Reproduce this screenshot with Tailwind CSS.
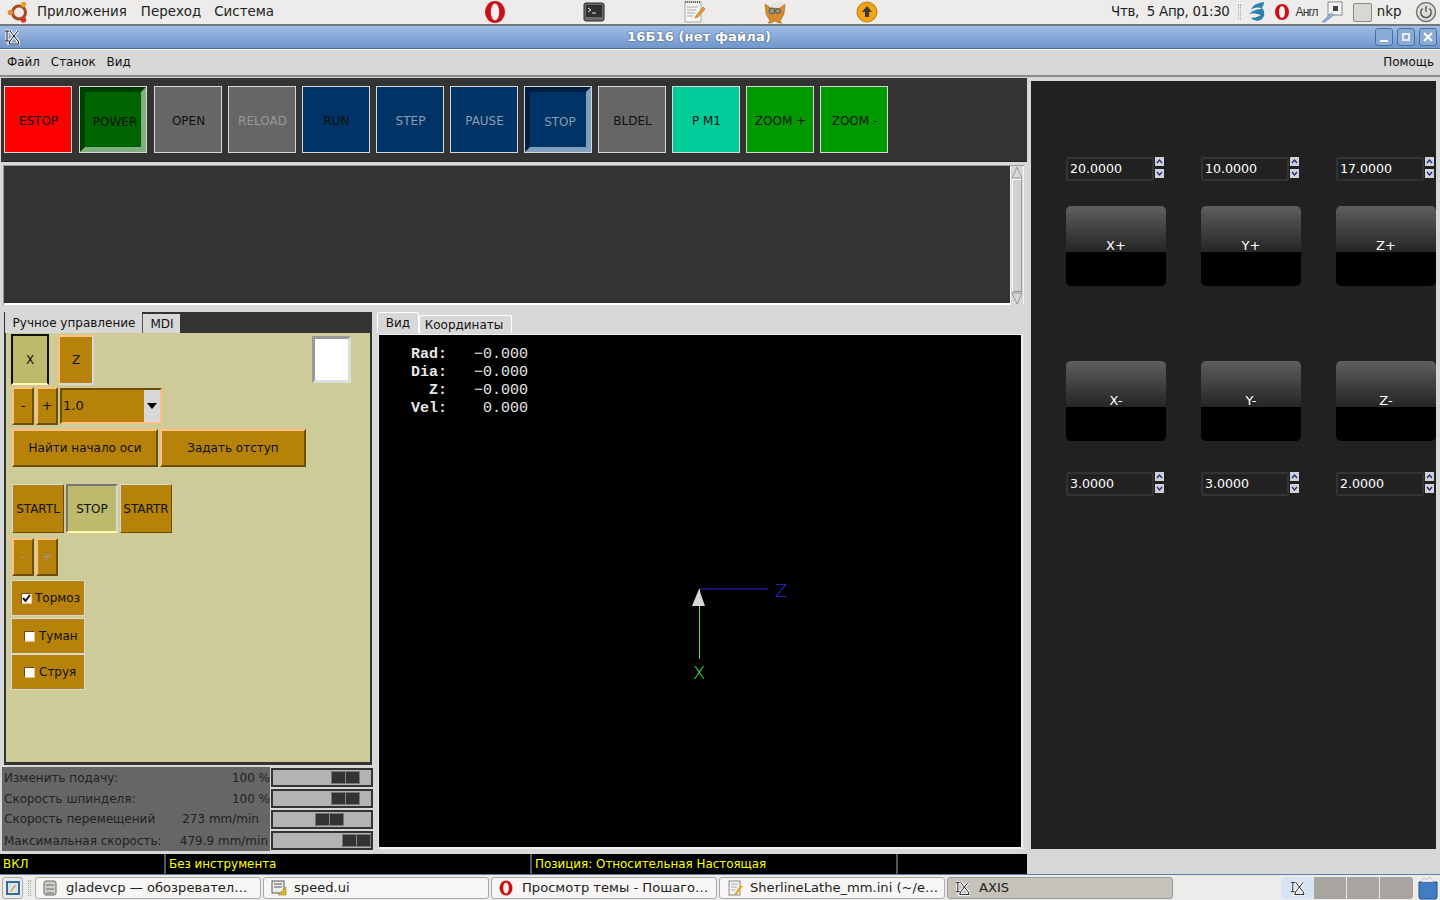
<!DOCTYPE html>
<html lang="ru">
<head>
    <meta charset="UTF-8">
    <title>16Б16 (нет файла)</title>
    <script src="https://cdn.jsdelivr.net/npm/@tailwindcss/browser@4"></script>
</head>
<body class="w-[1440px] h-[900px] overflow-hidden flex flex-col bg-[#d8d8d8] font-['DejaVu_Sans',sans-serif] text-[#111]">
    <!-- Top panel -->
    <header class="h-[26px] shrink-0 flex items-center bg-[#edecea] border-b-2 border-[#77777a] text-[13.4px] text-[#222]">
        <svg class="ml-[7px] w-[22px] h-[22px]" viewBox="0 0 22 22"><circle cx="12" cy="11.5" r="6.5" fill="none" stroke="#a8481c" stroke-width="3"/><circle cx="3.5" cy="11.5" r="2.8" fill="#e8873a"/><circle cx="16.5" cy="3.5" r="2.8" fill="#f0a030"/><circle cx="16.5" cy="19" r="2.8" fill="#d8342a"/></svg>
        <span class="ml-[7px] pl-[1px]">Приложения</span>
        <span class="ml-[14px]">Переход</span>
        <span class="ml-[13px]">Система</span>
        <!-- launchers -->
        <svg class="ml-[210px] w-[22px] h-[24px]" viewBox="0 0 22 24"><ellipse cx="11" cy="12" rx="10" ry="11" fill="#cc0f16"/><ellipse cx="11" cy="12" rx="4.2" ry="8.5" fill="#f6f0ee"/></svg>
        <svg class="ml-[77px] w-[22px] h-[20px]" viewBox="0 0 22 20"><rect x="1" y="1" width="20" height="18" rx="2" fill="#6a6d6e" stroke="#2a2a2a"/><rect x="3" y="3" width="16" height="12" fill="#2d3133"/><path d="M5 6l3 2-3 2M9 11h4" stroke="#eee" fill="none"/></svg>
        <svg class="ml-[77px] w-[24px] h-[24px]" viewBox="0 0 24 24"><rect x="3" y="2" width="16" height="20" fill="#f4f4f0" stroke="#aaa"/><path d="M5 7h11M5 10h9M5 13h8M5 16h6" stroke="#aaa"/><path d="M3 2h16" stroke="#666" stroke-dasharray="1 1" stroke-width="2"/><path d="M14 16l7-9 2 2-7 8-3 1z" fill="#f29a1f" stroke="#8a5a10" stroke-width=".5"/></svg>
        <svg class="ml-[56px] w-[26px] h-[24px]" viewBox="0 0 24 24"><path d="M2 4l6 4h8l6-4-1 10-4 7 2 2h-3l-4-2-4 2H5l2-2-4-7z" fill="#d98a2c" stroke="#8a5518" stroke-width=".5"/><path d="M6 7l8-6 8 3-6 4z" fill="#e4e4e0"/><circle cx="9" cy="11" r="3" fill="#8a9a80" stroke="#555"/><circle cx="15" cy="11" r="2.5" fill="#8a9a80" stroke="#555"/></svg>
        <svg class="ml-[68px] w-[22px] h-[22px]" viewBox="0 0 22 22"><circle cx="11" cy="11" r="10" fill="#efa512" stroke="#c9780a"/><path d="M11 5l5 6h-3v5H9v-5H6z" fill="#3a3a3a"/></svg>
        <span class="ml-[233px] whitespace-pre tracking-[-0.3px]">Чтв,  5 Апр, 01:30</span>
        <span class="ml-[8px] w-[3px] h-[16px] border-x border-dotted border-[#aaa]"></span>
        <svg class="ml-[6px] w-[20px] h-[22px]" viewBox="0 0 20 22"><path d="M17 1C10 2 6 4 4 9c4-3 8-3 11-1-4 0-9 1-13 5 5-1 9 0 12 1-3 2-7 3-10 3 3 3 8 4 11 1 3-3 3-8 0-11 1-2 2-4 2-6z" fill="#2a7fb0"/></svg>
        <svg class="ml-[7px] w-[16px] h-[18px]" viewBox="0 0 16 18"><ellipse cx="8" cy="9" rx="7" ry="8" fill="#cc0f16"/><ellipse cx="8" cy="9" rx="3" ry="6" fill="#f6f0ee"/></svg>
        <span class="ml-[6px] text-[12px] tracking-[-0.9px] font-['Liberation_Sans',sans-serif] text-[#333]">Англ</span>
        <svg class="ml-[3px] w-[22px] h-[22px]" viewBox="0 0 22 22"><rect x="7" y="1" width="14" height="13" fill="#f6f6f4" stroke="#888"/><rect x="12" y="5" width="5" height="5" fill="#444"/><path d="M1 21l9-9 3 2-9 7z" fill="#8fb0d8" stroke="#5a7aa8" stroke-width=".5"/></svg>
        <span class="ml-[10px] w-[19px] h-[19px] bg-[#d8d8d2] border border-[#8a8a86] rounded-[2px]"></span>
        <span class="ml-[5px] text-[13.4px]">nkp</span>
        <svg class="ml-[14px] w-[22px] h-[22px]" viewBox="0 0 22 22"><circle cx="11" cy="11" r="9.5" fill="#dddcd8" stroke="#777" stroke-width="1.5"/><path d="M11 5v6M7.5 7.5a5.2 5.2 0 1 0 7 0" fill="none" stroke="#444" stroke-width="1.2"/></svg>
    </header>

    <!-- Title bar -->
    <div class="h-[23px] shrink-0 flex items-center bg-linear-to-b from-[#9fbde5] to-[#7096cb] border-b border-[#47709f]">
        <span class="w-[24px] pl-[4px]"><svg class="w-[16px] h-[16px]" viewBox="0 0 16 16"><path d="M1 2h4M3 2v10M1 12h4M6 2l8 10M14 2L6 12M6 12l-1 3h10l-1-3" stroke="#fff" fill="none" stroke-width="3"/><path d="M1 2h4M3 2v10M1 12h4M6 2l8 10M14 2L6 12M6 12l-1 3h10l-1-3" stroke="#111" fill="none"/></svg></span>
        <span class="ml-[603px] w-[143px] whitespace-nowrap text-center text-[13px] font-bold text-white tracking-[0.15px] [text-shadow:0_0_2px_#345]">16Б16 (нет файла)</span>
        <div class="ml-auto flex gap-[4px] pr-[3px]">
            <span class="w-[18px] h-[18px] rounded-[3px] border border-[#47709f] bg-[#8aaad8] flex items-end justify-center pb-[3px]"><span class="w-[8px] h-[2px] bg-white"></span></span>
            <span class="w-[18px] h-[18px] rounded-[3px] border border-[#47709f] bg-[#8aaad8] flex items-center justify-center"><span class="w-[8px] h-[8px] border-2 border-[#e8eef8]"></span></span>
            <span class="w-[18px] h-[18px] rounded-[3px] border border-[#47709f] bg-[#8aaad8] flex items-center justify-center"><svg class="w-[10px] h-[10px]" viewBox="0 0 10 10"><path d="M1 1l8 8M9 1L1 9" stroke="#fff" stroke-width="2"/></svg></span>
        </div>
    </div>

    <!-- Menu -->
    <nav class="h-[28px] shrink-0 flex items-center gap-[11px] pl-[7px] pr-[6px] pt-[1px] bg-[#d8d8d8] border-t border-white border-b-2 border-b-[#8a8a8a] text-[11.9px]">
        <span>Файл</span><span>Станок</span><span>Вид</span>
        <span class="ml-auto">Помощь</span>
    </nav>

    <main class="flex-1 flex min-h-0">
        <div class="w-[1027px] shrink-0 flex flex-col">
            <!-- Toolbar -->
            <div class="mt-[1px] ml-[1px] h-[84px] shrink-0 bg-[#333] border-b border-[#222] pt-[8px] pl-[3px] flex gap-[6px] items-start text-[12px]">
                <button class="w-[68px] h-[67px] pt-[2px] pl-[1px] border border-[#d8d8d8] bg-[#ff0000] text-[#111]">ESTOP</button>
                <button class="ml-[1px] w-[68px] h-[67px] outline outline-1 -outline-offset-1 outline-[#d8d8d8] border-[6px] border-t-[#003f00] border-l-[#003f00] border-b-[#80b080] border-r-[#80b080] bg-[#006400] text-[#111] pt-[4px] pl-[4px]">POWER</button>
                <button class="ml-[1px] w-[68px] h-[67px] pt-[2px] pl-[1px] border border-[#d8d8d8] bg-[#666] text-[#111]">OPEN</button>
                <button class="w-[68px] h-[67px] pt-[2px] pl-[1px] border border-[#d8d8d8] bg-[#666] text-[#999]">RELOAD</button>
                <button class="w-[68px] h-[67px] pt-[2px] pl-[1px] border border-[#d8d8d8] bg-[#003366] text-[#111]">RUN</button>
                <button class="w-[68px] h-[67px] pt-[2px] pl-[1px] border border-[#d8d8d8] bg-[#003366] text-[#8a9cb0]">STEP</button>
                <button class="w-[68px] h-[67px] pt-[2px] pl-[1px] border border-[#d8d8d8] bg-[#003366] text-[#8a9cb0]">PAUSE</button>
                <button class="w-[68px] h-[67px] outline outline-1 -outline-offset-1 outline-[#d8d8d8] border-[6px] border-t-[#001f3f] border-l-[#001f3f] border-b-[#80a0c0] border-r-[#80a0c0] bg-[#003366] text-[#8a9cb0] pt-[4px] pl-[4px]">STOP</button>
                <button class="w-[68px] h-[67px] pt-[2px] pl-[1px] border border-[#d8d8d8] bg-[#666] text-[#111]">BLDEL</button>
                <button class="w-[68px] h-[67px] pt-[2px] pl-[1px] border border-[#d8d8d8] bg-[#00cc99] text-[#111]">P M1</button>
                <button class="w-[68px] h-[67px] pt-[2px] pl-[1px] border border-[#d8d8d8] bg-[#009900] text-[#111]">ZOOM +</button>
                <button class="w-[68px] h-[67px] pt-[2px] pl-[1px] border border-[#d8d8d8] bg-[#009900] text-[#111]">ZOOM -</button>
            </div>

            <!-- Message area -->
            <div class="mt-[3px] ml-[3px] mr-[3px] h-[140px] shrink-0 flex border-t border-l border-[#999]">
                <div class="flex-1 bg-[#333] border-b-2 border-white"></div>
                <div class="w-[14px] flex flex-col items-center bg-[#d8d8d8] border-x border-[#f4f4f4]">
                    <svg class="w-[12px] h-[13px]" viewBox="0 0 12 13"><path d="M1 12L6 1l5 11z" fill="#d8d8d8" stroke="#999"/></svg>
                    <div class="flex-1 w-[10px] bg-[#d0d0d0] border border-[#fafafa] border-r-[#999] border-b-[#999]"></div>
                    <svg class="w-[12px] h-[13px]" viewBox="0 0 12 13"><path d="M1 1l5 11 5-11z" fill="#d8d8d8" stroke="#999"/></svg>
                </div>
            </div>

            <div class="mt-[7px] flex flex-1 min-h-0">
                <!-- Left column -->
                <div class="w-[374px] shrink-0 flex flex-col">
                    <div class="ml-[4px] w-[368px] h-[453px] flex flex-col">
                        <div class="h-[21px] shrink-0 bg-[#333] flex items-end text-[12px]">
                            <span class="ml-[1px] w-[137px] h-[21px] pl-[1px] bg-[#d8d8d8] flex items-center justify-center">Ручное управление</span>
                            <span class="w-[38px] h-[19px] pl-[1px] bg-[#d8d8d8] border-l border-[#555] flex items-center justify-center">MDI</span>
                        </div>
                        <div class="flex-1 bg-[#cdcb98] border-2 border-t-0 border-[#333] border-b-[3px] pl-[5px] pt-[1px] text-[12px]">
                            <!-- axis select -->
                            <div class="flex items-start">
                                <button class="w-[38px] h-[51px] border-2 border-t-[#111] border-l-[#111] border-b-[#fff9a8] border-r-[#111] bg-[#bdb96d]">X</button>
                                <button class="ml-[9px] mt-[1px] w-[36px] h-[50px] bg-[#b6820a] border-2 border-t-[#ffbf80] border-l-[#ffbf80] border-b-[#d8d8d8] border-r-[#d8d8d8]">Z</button>
                                <div class="ml-[218px] mt-[2px] w-[39px] h-[47px] bg-white border-[3px] border-t-[#999] border-l-[#999] border-b-[#ddd] border-r-[#ddd]"></div>
                            </div>
                            <!-- jog increment -->
                            <div class="mt-[2px] flex items-center gap-[2px] ml-[1px]">
                                <button class="w-[22px] h-[38px] bg-[#b6820a] border-2 border-t-[#ffbf80] border-l-[#ffbf80] border-b-[#6e4e06] border-r-[#6e4e06] text-[13px]">-</button>
                                <button class="w-[22px] h-[38px] bg-[#b6820a] border-2 border-t-[#ffbf80] border-l-[#ffbf80] border-b-[#6e4e06] border-r-[#6e4e06] text-[13px]">+</button>
                                <div class="w-[102px] h-[36px] flex items-center bg-[#b6820a] border-2 border-t-[#6e4e06] border-l-[#6e4e06] border-b-[#ffbf80] border-r-[#ffbf80] pl-[1px] text-[13px]">
                                    <span class="flex-1">1.0</span>
                                    <span class="w-[16px] h-[32px] bg-[#d8d8d8] flex items-center justify-center"><span class="w-0 h-0 border-x-[5px] border-x-transparent border-t-[6px] border-t-black"></span></span>
                                </div>
                            </div>
                            <!-- home / offset -->
                            <div class="mt-[4px] ml-[1px] flex gap-[2px]">
                                <button class="w-[146px] h-[38px] bg-[#b6820a] border-2 border-t-[#ffbf80] border-l-[#ffbf80] border-b-[#6e4e06] border-r-[#6e4e06]">Найти начало оси</button>
                                <button class="w-[146px] h-[38px] bg-[#b6820a] border-2 border-t-[#ffbf80] border-l-[#ffbf80] border-b-[#6e4e06] border-r-[#6e4e06]">Задать отступ</button>
                            </div>
                            <!-- spindle -->
                            <div class="mt-[17px] ml-[1px] flex gap-[2px]">
                                <button class="w-[52px] h-[49px] bg-[#b6820a] border border-[#d8d8d8] border-b-[#6e4e06] border-r-[#6e4e06]">STARTL</button>
                                <button class="w-[52px] h-[49px] bg-[#bdb96d] border-2 border-t-[#777] border-l-[#777] border-b-[#fff9a8] border-r-[#d8d8d8]">STOP</button>
                                <button class="w-[52px] h-[49px] bg-[#b6820a] border border-[#d8d8d8] border-b-[#6e4e06] border-r-[#6e4e06]">STARTR</button>
                            </div>
                            <div class="mt-[5px] ml-[1px] flex gap-[2px] text-[#999] text-[13px]">
                                <button class="w-[22px] h-[38px] bg-[#b6820a] border-2 border-t-[#ffbf80] border-l-[#ffbf80] border-b-[#6e4e06] border-r-[#6e4e06]">-</button>
                                <button class="w-[22px] h-[38px] bg-[#b6820a] border-2 border-t-[#ffbf80] border-l-[#ffbf80] border-b-[#6e4e06] border-r-[#6e4e06]">+</button>
                            </div>
                            <!-- coolant -->
                            <div class="mt-[4px] flex flex-col w-[74px]">
                                <label class="h-[36px] bg-[#b6820a] border border-[#d8d8d8] flex items-center pl-[9px] gap-[3px]"><span class="w-[11px] h-[11px] bg-white border border-[#6e4e06] border-b-[#ffbf80] border-r-[#ffbf80] flex items-center justify-center"><svg class="w-[9px] h-[9px]" viewBox="0 0 9 9"><path d="M1 4l2.5 3L8 1" fill="none" stroke="#111" stroke-width="2"/></svg></span>Тормоз</label>
                                <label class="mt-[2px] h-[36px] bg-[#b6820a] border border-[#d8d8d8] flex items-center pl-[12px] gap-[4px]"><span class="w-[11px] h-[11px] bg-white border border-[#6e4e06] border-b-[#ffbf80] border-r-[#ffbf80]"></span>Туман</label>
                                <label class="h-[36px] bg-[#b6820a] border border-[#d8d8d8] flex items-center pl-[12px] gap-[4px]"><span class="w-[11px] h-[11px] bg-white border border-[#6e4e06] border-b-[#ffbf80] border-r-[#ffbf80]"></span>Струя</label>
                            </div>
                        </div>
                    </div>
                    <!-- Overrides -->
                    <div class="mt-[2px] ml-[2px] flex h-[84px] text-[12px] text-[#222]">
                        <div class="w-[268px] bg-[#666] flex flex-col pl-[2px]">
                            <div class="h-[20px] pt-[2px] flex items-center justify-between"><span>Изменить подачу:</span><span>100 %</span></div>
                            <div class="mt-[2px] h-[20px] flex items-center justify-between"><span>Скорость шпинделя:</span><span>100 %</span></div>
                            <div class="h-[20px] flex items-center"><span>Скорость перемещений</span><span class="ml-[27px]">273 mm/min</span></div>
                            <div class="mt-[2px] h-[20px] flex items-center justify-between pr-[2px]"><span>Максимальная скорость:</span><span>479.9 mm/min</span></div>
                        </div>
                        <div class="ml-[1px] flex flex-col gap-[2px] pt-[1px]">
                            <div class="w-[102px] h-[19px] bg-[#b3b3b3] border-2 border-[#333] flex items-center pl-[58px]"><span class="w-[29px] h-[13px] bg-[#333] border border-[#777] flex"><span class="flex-1 border-r border-[#888]"></span><span class="flex-1"></span></span></div>
                            <div class="w-[102px] h-[19px] bg-[#b3b3b3] border-2 border-[#333] flex items-center pl-[58px]"><span class="w-[29px] h-[13px] bg-[#333] border border-[#777] flex"><span class="flex-1 border-r border-[#888]"></span><span class="flex-1"></span></span></div>
                            <div class="w-[102px] h-[19px] bg-[#b3b3b3] border-2 border-[#333] flex items-center pl-[42px]"><span class="w-[29px] h-[13px] bg-[#333] border border-[#777] flex"><span class="flex-1 border-r border-[#888]"></span><span class="flex-1"></span></span></div>
                            <div class="w-[102px] h-[19px] bg-[#b3b3b3] border-2 border-[#333] flex items-center pl-[69px]"><span class="w-[29px] h-[13px] bg-[#333] border border-[#777] flex"><span class="flex-1 border-r border-[#888]"></span><span class="flex-1"></span></span></div>
                        </div>
                    </div>
                </div>

                <!-- Preview -->
                <div class="ml-[3px] w-[646px] flex flex-col">
                    <div class="h-[21px] shrink-0 flex items-end text-[12px]">
                        <span class="w-[42px] h-[21px] pb-[1px] bg-[#d8d8d8] border border-b-0 border-white rounded-t-[3px] flex items-center justify-center">Вид</span>
                        <span class="w-[93px] h-[18px] pr-[3px] border border-b-0 border-white rounded-t-[3px] bg-[#d8d8d8] flex items-center justify-center">Координаты</span>
                    </div>
                    <div class="relative mt-[2px] ml-[2px] w-[644px] h-[514px] bg-black border-r-2 border-b-2 border-[#f0f0f0] shadow-[0_-1px_0_#f0f0f0,-1px_0_0_#f0f0f0]">
                        <pre class="absolute left-[32px] top-[11px] font-['Liberation_Mono',monospace] font-bold text-[15px] leading-[18px] text-[#e8e8e8]">Rad:   <span class="font-normal">−0.000</span>
Dia:   <span class="font-normal">−0.000</span>
  Z:   <span class="font-normal">−0.000</span>
Vel:    <span class="font-normal">0.000</span></pre>
                        <svg class="absolute left-[299px] top-[239px]" width="120" height="110" viewBox="0 0 120 110">
                            <path d="M21 15h69" stroke="#2a2ad8" fill="none"/>
                            <path d="M21.5 15v70" stroke="#66e066" fill="none"/>
                            <path d="M21 15l-7 17h13z" fill="#d8d8d8"/>
                            <text x="97" y="23" font-family="DejaVu Sans" font-size="18" font-weight="200" fill="#2a2ae0">Z</text>
                            <text x="15" y="105" font-family="DejaVu Sans" font-size="18" font-weight="200" fill="#44e044">X</text>
                        </svg>
                    </div>
                </div>
            </div>

            <!-- Status bar -->
            <div class="h-[20px] shrink-0 mt-auto bg-black flex text-[11.9px] text-[#ffff00] leading-[20px] pl-[1px]">
                <span class="w-[165px] pl-[2px] border-r-2 border-[#555]">ВКЛ</span>
                <span class="w-[366px] pl-[3px] border-r-2 border-[#555]">Без инструмента</span>
                <span class="w-[366px] pl-[3px] border-r-2 border-[#555]">Позиция: Относительная Настоящая</span>
            </div>
        </div>

        <!-- Jog panel -->
        <div class="ml-[4px] mt-[4px] w-[405px] h-[768px] shrink-0 bg-[#212121] pl-[35px] pt-[76px] text-[13px] text-white">
            <div class="grid grid-cols-[100px_100px_100px] gap-x-[35px]">
                <div class="flex items-start"><span class="w-[88px] h-[24px] border-2 border-[#333] rounded-[2px] pl-[2px] leading-[19px] text-[12.6px]">20.0000</span><span class="flex flex-col gap-[3px] ml-[1px]"><svg class="w-[9px] h-[9px] bg-[#d0d0d8]" viewBox="0 0 9 9"><path d="M2 6l2.5-3L7 6" fill="none" stroke="#1a2a80" stroke-width="1.3"/></svg><svg class="w-[9px] h-[9px] bg-[#d0d0d8]" viewBox="0 0 9 9"><path d="M2 3l2.5 3L7 3" fill="none" stroke="#1a2a80" stroke-width="1.3"/></svg></span></div>
                <div class="flex items-start"><span class="w-[88px] h-[24px] border-2 border-[#333] rounded-[2px] pl-[2px] leading-[19px] text-[12.6px]">10.0000</span><span class="flex flex-col gap-[3px] ml-[1px]"><svg class="w-[9px] h-[9px] bg-[#d0d0d8]" viewBox="0 0 9 9"><path d="M2 6l2.5-3L7 6" fill="none" stroke="#1a2a80" stroke-width="1.3"/></svg><svg class="w-[9px] h-[9px] bg-[#d0d0d8]" viewBox="0 0 9 9"><path d="M2 3l2.5 3L7 3" fill="none" stroke="#1a2a80" stroke-width="1.3"/></svg></span></div>
                <div class="flex items-start"><span class="w-[88px] h-[24px] border-2 border-[#333] rounded-[2px] pl-[2px] leading-[19px] text-[12.6px]">17.0000</span><span class="flex flex-col gap-[3px] ml-[1px]"><svg class="w-[9px] h-[9px] bg-[#d0d0d8]" viewBox="0 0 9 9"><path d="M2 6l2.5-3L7 6" fill="none" stroke="#1a2a80" stroke-width="1.3"/></svg><svg class="w-[9px] h-[9px] bg-[#d0d0d8]" viewBox="0 0 9 9"><path d="M2 3l2.5 3L7 3" fill="none" stroke="#1a2a80" stroke-width="1.3"/></svg></span></div>

                <button class="mt-[25px] h-[80px] rounded-[5px] bg-linear-to-b from-[#5f5f5f] from-0% via-[#262626] via-57% to-black to-57% pb-[1px]">X+</button>
                <button class="mt-[25px] h-[80px] rounded-[5px] bg-linear-to-b from-[#5f5f5f] from-0% via-[#262626] via-57% to-black to-57% pb-[1px]">Y+</button>
                <button class="mt-[25px] h-[80px] rounded-[5px] bg-linear-to-b from-[#5f5f5f] from-0% via-[#262626] via-57% to-black to-57% pb-[1px]">Z+</button>

                <button class="mt-[75px] h-[80px] rounded-[5px] bg-linear-to-b from-[#5f5f5f] from-0% via-[#262626] via-57% to-black to-57% pb-[1px]">X-</button>
                <button class="mt-[75px] h-[80px] rounded-[5px] bg-linear-to-b from-[#5f5f5f] from-0% via-[#262626] via-57% to-black to-57% pb-[1px]">Y-</button>
                <button class="mt-[75px] h-[80px] rounded-[5px] bg-linear-to-b from-[#5f5f5f] from-0% via-[#262626] via-57% to-black to-57% pb-[1px]">Z-</button>

                <div class="mt-[31px] flex items-start"><span class="w-[88px] h-[24px] border-2 border-[#333] rounded-[2px] pl-[2px] leading-[19px] text-[12.6px]">3.0000</span><span class="flex flex-col gap-[3px] ml-[1px]"><svg class="w-[9px] h-[9px] bg-[#d0d0d8]" viewBox="0 0 9 9"><path d="M2 6l2.5-3L7 6" fill="none" stroke="#1a2a80" stroke-width="1.3"/></svg><svg class="w-[9px] h-[9px] bg-[#d0d0d8]" viewBox="0 0 9 9"><path d="M2 3l2.5 3L7 3" fill="none" stroke="#1a2a80" stroke-width="1.3"/></svg></span></div>
                <div class="mt-[31px] flex items-start"><span class="w-[88px] h-[24px] border-2 border-[#333] rounded-[2px] pl-[2px] leading-[19px] text-[12.6px]">3.0000</span><span class="flex flex-col gap-[3px] ml-[1px]"><svg class="w-[9px] h-[9px] bg-[#d0d0d8]" viewBox="0 0 9 9"><path d="M2 6l2.5-3L7 6" fill="none" stroke="#1a2a80" stroke-width="1.3"/></svg><svg class="w-[9px] h-[9px] bg-[#d0d0d8]" viewBox="0 0 9 9"><path d="M2 3l2.5 3L7 3" fill="none" stroke="#1a2a80" stroke-width="1.3"/></svg></span></div>
                <div class="mt-[31px] flex items-start"><span class="w-[88px] h-[24px] border-2 border-[#333] rounded-[2px] pl-[2px] leading-[19px] text-[12.6px]">2.0000</span><span class="flex flex-col gap-[3px] ml-[1px]"><svg class="w-[9px] h-[9px] bg-[#d0d0d8]" viewBox="0 0 9 9"><path d="M2 6l2.5-3L7 6" fill="none" stroke="#1a2a80" stroke-width="1.3"/></svg><svg class="w-[9px] h-[9px] bg-[#d0d0d8]" viewBox="0 0 9 9"><path d="M2 3l2.5 3L7 3" fill="none" stroke="#1a2a80" stroke-width="1.3"/></svg></span></div>
            </div>
        </div>
    </main>

    <!-- Bottom panel -->
    <footer class="h-[26px] shrink-0 flex items-center bg-[#edecea] border-t border-[#5f7fa8] text-[13.1px] text-[#222] pl-[2px]">
        <span class="w-[21px] h-[22px] border border-[#aaa] rounded-[3px] flex items-center justify-center"><svg class="w-[16px] h-[16px]" viewBox="0 0 16 16"><rect x="2" y="2" width="12" height="12" fill="#d8e4f0" stroke="#3a6a9a" stroke-width="2"/><path d="M5 11l5-6 1 1-5 6z" fill="#e89a2a"/></svg></span>
        <span class="ml-[5px] w-[3px] h-[16px] border-x border-dotted border-[#aaa]"></span>
        <div class="ml-[4px] mt-[1px] flex gap-[2px]">
            <span class="w-[226px] h-[22px] bg-[#f7f6f4] border border-[#aaa] rounded-[3px] flex items-center pl-[7px] gap-[9px]"><svg class="w-[14px] h-[16px]" viewBox="0 0 14 16"><rect x="1" y="1" width="12" height="14" rx="2" fill="#cfcfc8" stroke="#666"/><path d="M3 5h8M3 9h8M3 13h8" stroke="#666"/></svg>gladevcp — обозревател…</span>
            <span class="w-[226px] h-[22px] bg-[#f7f6f4] border border-[#aaa] rounded-[3px] flex items-center pl-[7px] gap-[7px]"><svg class="w-[16px] h-[16px]" viewBox="0 0 16 16"><rect x="1" y="1" width="12" height="12" fill="#eee" stroke="#555"/><path d="M3 4h8M3 7h8" stroke="#555"/><path d="M15 7v8H7z" fill="#d8b830" stroke="#8a7010" stroke-width=".5"/></svg>speed.ui</span>
            <span class="w-[226px] h-[22px] bg-[#f7f6f4] border border-[#aaa] rounded-[3px] flex items-center pl-[7px] gap-[9px]"><svg class="w-[14px] h-[16px]" viewBox="0 0 14 16"><ellipse cx="7" cy="8" rx="6.5" ry="7.5" fill="#cc0f16"/><ellipse cx="7" cy="8" rx="2.8" ry="5.5" fill="#f6f0ee"/></svg>Просмотр темы - Пошаго…</span>
            <span class="w-[226px] h-[22px] bg-[#f7f6f4] border border-[#aaa] rounded-[3px] flex items-center pl-[7px] gap-[7px]"><svg class="w-[16px] h-[16px]" viewBox="0 0 16 16"><rect x="2" y="1" width="11" height="14" fill="#f4f4f0" stroke="#888"/><path d="M4 4h7M4 7h6M4 10h4" stroke="#aaa"/><path d="M8 13l6-8 1.5 1.5-6 8-2 .5z" fill="#f29a1f"/></svg>SherlineLathe_mm.ini (~/e…</span>
            <span class="w-[226px] h-[22px] bg-[#c5c2ba] border border-[#999] rounded-[3px] flex items-center pl-[7px] gap-[9px]"><svg class="w-[15px] h-[16px]" viewBox="0 0 16 16"><path d="M1 2h4M3 2v10M1 12h4M6 2l8 10M14 2L6 12M6 12l-1 3h10l-1-3" stroke="#fff" fill="none" stroke-width="3"/><path d="M1 2h4M3 2v10M1 12h4M6 2l8 10M14 2L6 12M6 12l-1 3h10l-1-3" stroke="#111" fill="none"/></svg>AXIS</span>
        </div>
        <div class="ml-[108px] mt-[1px] flex h-[22px] rounded-[3px] overflow-hidden">
            <span class="w-[33px] bg-[#d8e4f4] flex items-center justify-center"><svg class="w-[15px] h-[16px]" viewBox="0 0 16 16"><path d="M1 2h4M3 2v10M1 12h4M6 2l8 10M14 2L6 12M6 12l-1 3h10l-1-3" stroke="#fff" fill="none" stroke-width="3"/><path d="M1 2h4M3 2v10M1 12h4M6 2l8 10M14 2L6 12M6 12l-1 3h10l-1-3" stroke="#111" fill="none"/></svg></span>
            <span class="w-[33px] bg-[#a8a4a0] border-r border-[#e8e8e8]"></span>
            <span class="w-[33px] bg-[#a8a4a0] border-r border-[#e8e8e8]"></span>
            <span class="w-[33px] bg-[#a8a4a0]"></span>
        </div>
        <svg class="ml-[5px] w-[20px] h-[24px]" viewBox="0 0 20 24"><path d="M1 6h18v15a2 2 0 0 1-2 2H3a2 2 0 0 1-2-2z" fill="#3f7ec4" stroke="#23507f"/><path d="M3 6l3-4 3 2 3-3 4 5z" fill="#f0f0f0" stroke="#999" stroke-width=".5"/></svg>
    </footer>
</body>
</html>
